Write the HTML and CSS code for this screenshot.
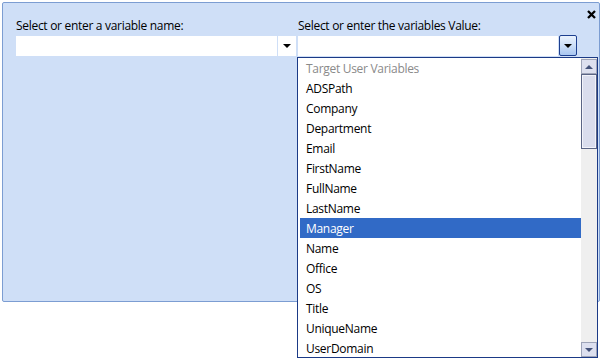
FILE: index.html
```html
<!DOCTYPE html>
<html>
<head>
<meta charset="utf-8">
<link rel="stylesheet" href="styles.css">
</head>
<body>
<div class="panel">
  <button class="close" aria-label="Close">
    <svg width="9" height="9" viewBox="0 0 9 9"><path d="M1 1 L8 8 M8 1 L1 8" stroke="#000" stroke-width="2.3" fill="none"/></svg>
  </button>
  <div class="fields">
    <div class="field">
      <label class="label">Select or enter a variable name:</label>
      <div class="combo">
        <div class="combo-text"></div>
        <div class="combo-arrow"><span class="tri"></span></div>
      </div>
    </div>
    <div class="field">
      <label class="label">Select or enter the variables Value:</label>
      <div class="combo">
        <div class="combo-text"></div>
        <div class="combo-btn"><span class="tri"></span></div>
      </div>
    </div>
  </div>
</div>

<div class="popup">
  <ul class="list">
    <li class="item header">Target User Variables</li>
    <li class="item">ADSPath</li>
    <li class="item">Company</li>
    <li class="item">Department</li>
    <li class="item">Email</li>
    <li class="item">FirstName</li>
    <li class="item">FullName</li>
    <li class="item">LastName</li>
    <li class="item selected">Manager</li>
    <li class="item">Name</li>
    <li class="item">Office</li>
    <li class="item">OS</li>
    <li class="item">Title</li>
    <li class="item">UniqueName</li>
    <li class="item">UserDomain</li>
  </ul>
  <div class="scrollbar">
    <div class="sb-btn"><span class="sb-up"></span></div>
    <div class="sb-thumb"></div>
    <div class="sb-track"></div>
    <div class="sb-btn"><span class="sb-down"></span></div>
  </div>
</div>
</body>
</html>
```

FILE: styles.css
```css
* { box-sizing: border-box; }
html, body { margin: 0; padding: 0; background: #fff; }
body {
  width: 602px;
  height: 360px;
  overflow: hidden;
  font-family: "Open Sans", "Noto Sans", sans-serif;
  font-size: 12px;
  letter-spacing: -0.3px;
  color: #000;
  position: relative;
}
.panel {
  position: relative;
  margin: 2px 2px 0 2px;
  width: 598px;
  height: 300px;
  background: #cfdff7;
  border: 1px solid #7c9dd2;
  border-radius: 2px;
  padding: 16px 0 0 13px;
}
.close {
  position: absolute;
  top: 6px;
  right: 2px;
  width: 11px;
  height: 11px;
  padding: 1px;
  border: 0;
  background: transparent;
  display: flex;
}
.fields {
  display: grid;
  grid-template-columns: 280px 280px;
  column-gap: 2px;
}
.field { display: flex; flex-direction: column; }
.label {
  display: block;
  height: 17px;
  line-height: 14px;
  white-space: nowrap;
}
.combo {
  display: flex;
  height: 20px;
  gap: 1px;
}
.combo-text {
  flex: 1;
  background: #fff;
}
.combo-arrow {
  width: 18px;
  background: #fff;
  display: flex;
  align-items: center;
  justify-content: center;
}
.combo-btn {
  width: 18px;
  height: 21px;
  margin-top: -1px;
  margin-right: 1px;
  border: 1px solid #1d3f8f;
  border-radius: 2px;
  background: linear-gradient(#eaf2fd, #cddff8 50%, #a9c6f0);
  display: flex;
  align-items: center;
  justify-content: center;
}
.tri {
  width: 0;
  height: 0;
  border-left: 4px solid transparent;
  border-right: 4px solid transparent;
  border-top: 4px solid #000;
}
.popup {
  position: absolute;
  left: 297px;
  top: 57px;
  width: 301px;
  height: 301px;
  border: 1px solid #1b3a86;
  background: #fff;
  display: flex;
}
.list {
  list-style: none;
  margin: 0;
  padding: 0 0 0 2px;
  flex: 1;
}
.item {
  height: 20px;
  line-height: 18px;
  padding: 2px 0 0 6px;
  white-space: nowrap;
}
.item.header { color: #8a8a8a; }
.item.selected { background: #316ac6; color: #fff; }
.scrollbar {
  width: 16px;
  background: #efefef;
  display: flex;
  flex-direction: column;
  padding-top: 1px;
}
.sb-btn {
  height: 15px;
  border: 1px solid #9ea4b8;
  background: #dde0ef;
  display: flex;
  align-items: center;
  justify-content: center;
}
.sb-thumb {
  height: 75px;
  border: 1px solid #5b6585;
  box-shadow: inset 0 0 0 1px #f2f3fa;
  background: #dadded;
}
.sb-track { flex: 1; }
.sb-up, .sb-down {
  width: 0;
  height: 0;
  border-left: 4px solid transparent;
  border-right: 4px solid transparent;
}
.sb-up { border-bottom: 4px solid #44527a; }
.sb-down { border-top: 4px solid #44527a; }
```
